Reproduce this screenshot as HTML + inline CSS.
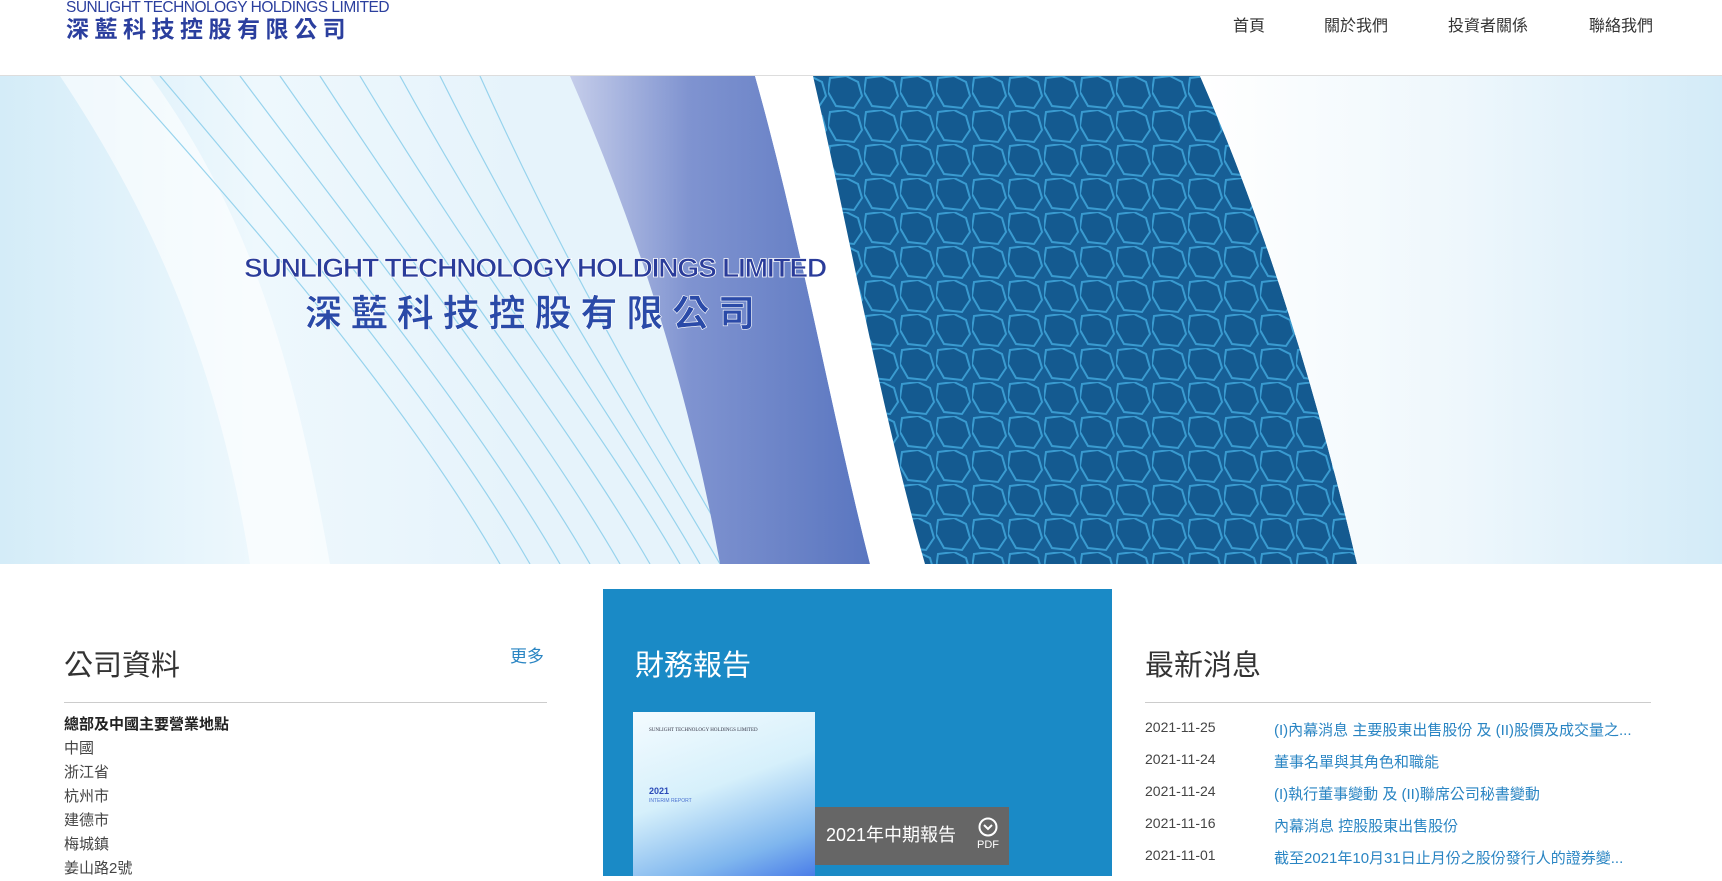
<!DOCTYPE html>
<html><head><meta charset="utf-8"><style>
*{margin:0;padding:0;box-sizing:border-box}
body{width:1722px;height:876px;overflow:hidden;background:#fff;font-family:"Liberation Sans","Noto Sans CJK TC",sans-serif;position:relative}
.a{position:absolute;white-space:nowrap}
.nav{font-size:16px;color:#333;top:12px}
.lst{left:64px;font-size:15px;color:#444;line-height:24px}
.d{left:1145px;font-size:14px;color:#444}
.l{left:1274px;font-size:15px;color:#2a85c3}
</style></head><body>
<div class="a" style="left:66px;top:0;font-size:15.5px;color:#2b3f9e;letter-spacing:-0.5px;line-height:16px;">SUNLIGHT TECHNOLOGY HOLDINGS LIMITED</div>
<div class="a" style="left:66px;top:15px;font-size:23px;color:#2b3f9e;font-weight:bold;letter-spacing:5.5px;line-height:28px;">深藍科技控股有限公司</div>
<div class="a nav" style="left:1233px">首頁</div>
<div class="a nav" style="left:1324px">關於我們</div>
<div class="a nav" style="left:1448px">投資者關係</div>
<div class="a nav" style="left:1589px">聯絡我們</div>
<div class="a" style="left:0;top:75px;width:1722px;height:1px;background:#ddd"></div>

<svg class="a" style="left:0;top:76px" width="1722" height="488" viewBox="0 0 1722 488">
<defs>
<linearGradient id="bg" x1="0" x2="1"><stop offset="0" stop-color="#d4ecf8"/><stop offset="0.15" stop-color="#eef8fd"/><stop offset="0.3" stop-color="#e6f3fb"/><stop offset="1" stop-color="#e8f4fb"/></linearGradient>
<linearGradient id="pu" x1="0" x2="1"><stop offset="0" stop-color="#c5cdea"/><stop offset="0.4" stop-color="#7f93d0"/><stop offset="1" stop-color="#5a76c0"/></linearGradient>
<linearGradient id="rt" x1="0" x2="1"><stop offset="0" stop-color="#ffffff"/><stop offset="0.5" stop-color="#eef7fc"/><stop offset="1" stop-color="#d3ebf8"/></linearGradient>
<pattern id="hx" width="36" height="34" patternUnits="userSpaceOnUse">
<rect width="36" height="34" fill="#175f96"/>
<path d="M2 2 L18 0 L30 6 L34 20 L26 32 L8 30 L0 16 Z" fill="#145a90" stroke="#3a9bd0" stroke-width="2"/>
</pattern>
</defs>
<rect width="1722" height="488" fill="url(#bg)"/>
<path d="M150 0 C260 150 300 320 330 488 L250 488 C220 300 160 150 60 0 Z" fill="#ffffff" opacity="0.6"/>
<g stroke="#8fd0ec" stroke-width="1.2" fill="none" opacity="0.9">
<path d="M120 0 C300 200 420 350 500 488"/><path d="M160 0 C330 200 450 350 530 488"/><path d="M200 0 C360 200 480 350 560 488"/><path d="M240 0 C390 200 510 350 590 488"/><path d="M280 0 C420 200 540 350 620 488"/><path d="M320 0 C450 200 570 350 650 488"/><path d="M360 0 C480 200 600 350 680 488"/><path d="M400 0 C510 200 620 350 700 488"/><path d="M440 0 C540 200 640 350 720 488"/><path d="M480 0 C570 200 660 350 740 488"/>
</g>
<path d="M570 0 L755 0 C800 160 830 330 870 488 L720 488 C690 320 640 160 570 0 Z" fill="url(#pu)"/>
<path d="M755 0 L813 0 C850 160 880 330 925 488 L870 488 C830 330 800 160 755 0 Z" fill="#fff"/>
<path d="M813 0 L1200 0 C1270 160 1320 330 1357 488 L925 488 C880 330 850 160 813 0 Z" fill="url(#hx)"/>
<path d="M1200 0 L1722 0 L1722 488 L1357 488 C1320 330 1270 160 1200 0 Z" fill="url(#rt)"/>
<text x="244" y="201" font-family="Liberation Sans" font-size="27" font-weight="bold" fill="#2a3c9a" stroke="#fff" stroke-width="0.8" letter-spacing="-1.2" textLength="582" lengthAdjust="spacingAndGlyphs">SUNLIGHT TECHNOLOGY HOLDINGS LIMITED</text>
<text x="305" y="250" font-family="Noto Sans CJK TC" font-size="37" font-weight="bold" fill="#2a4aa8" stroke="#fff" stroke-width="0.6" textLength="450" lengthAdjust="spacing">深藍科技控股有限公司</text>
</svg>

<div class="a" style="left:64px;top:642px;font-size:29px;color:#333">公司資料</div>
<div class="a" style="left:510px;top:642px;font-size:17px;color:#2a85c3">更多</div>
<div class="a" style="left:64px;top:702px;width:483px;height:1px;background:#ccc"></div>
<div class="a lst" style="top:713px"><span style="color:#222;font-weight:bold">總部及中國主要營業地點</span><br>中國<br>浙江省<br>杭州市<br>建德市<br>梅城鎮<br>姜山路2號</div>

<div class="a" style="left:603px;top:589px;width:509px;height:287px;background:#1a8ac6"></div>
<div class="a" style="left:635px;top:642px;font-size:29px;color:#fff">財務報告</div>
<div class="a" style="left:633px;top:712px;width:182px;height:164px;background:linear-gradient(160deg,#f4fbff 0%,#d6f0fb 45%,#7fb6ee 80%,#4a7de8 100%)">
<div style="position:absolute;left:16px;top:16px;font-size:5px;color:#334;font-family:'Liberation Serif'">SUNLIGHT TECHNOLOGY HOLDINGS LIMITED</div>
<div style="position:absolute;left:16px;top:74px;font-size:9px;color:#2a4ab8;font-weight:bold">2021</div>
<div style="position:absolute;left:16px;top:86px;font-size:5px;color:#4a70d0">INTERIM REPORT</div>
</div>
<div class="a" style="left:815px;top:807px;width:194px;height:58px;background:#666"></div>
<div class="a" style="left:826px;top:821px;font-size:18px;color:#fff">2021年中期報告</div>
<svg class="a" style="left:977px;top:817px" width="22" height="22"><circle cx="11" cy="10" r="8.5" fill="none" stroke="#fff" stroke-width="2"/><path d="M7 8 L11 12 L15 8" fill="none" stroke="#fff" stroke-width="2"/></svg>
<div class="a" style="left:977px;top:839px;font-size:11px;color:#fff">PDF</div>

<div class="a" style="left:1145px;top:642px;font-size:29px;color:#333">最新消息</div>
<div class="a" style="left:1145px;top:702px;width:506px;height:1px;background:#ccc"></div>
<div class="a d" style="top:719px">2021-11-25</div><div class="a l" style="top:719px">(I)內幕消息 主要股東出售股份 及 (II)股價及成交量之...</div>
<div class="a d" style="top:751px">2021-11-24</div><div class="a l" style="top:751px">董事名單與其角色和職能</div>
<div class="a d" style="top:783px">2021-11-24</div><div class="a l" style="top:783px">(I)執行董事變動 及 (II)聯席公司秘書變動</div>
<div class="a d" style="top:815px">2021-11-16</div><div class="a l" style="top:815px">內幕消息 控股股東出售股份</div>
<div class="a d" style="top:847px">2021-11-01</div><div class="a l" style="top:847px">截至2021年10月31日止月份之股份發行人的證券變...</div>
</body></html>
